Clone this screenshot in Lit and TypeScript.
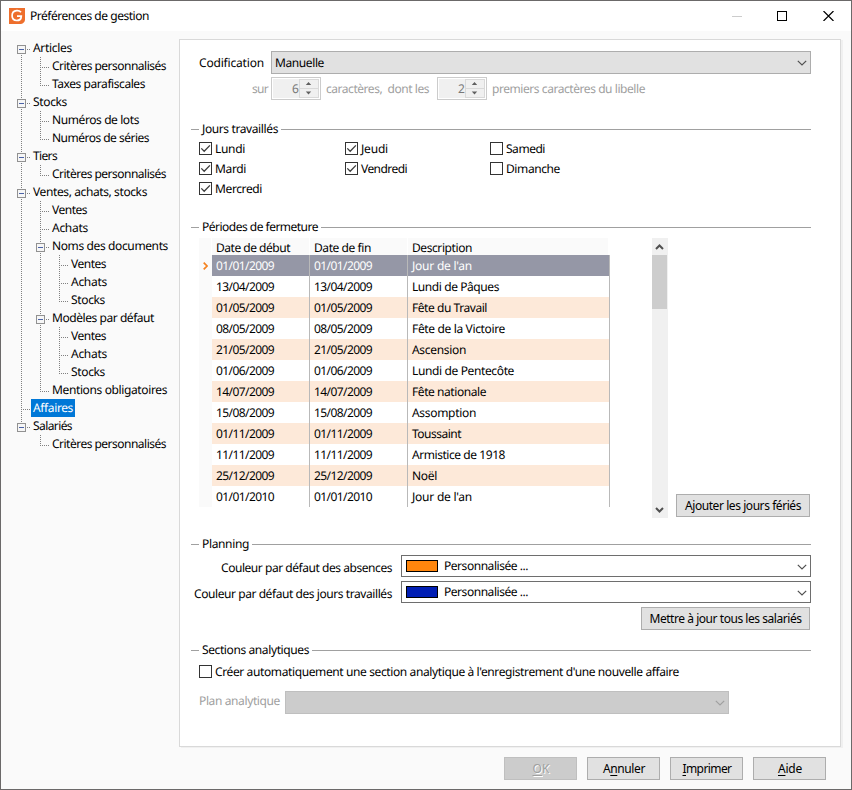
import { LitElement, html, svg, css, nothing } from "lit";
import { customElement, property } from "lit/decorators.js";
import { classMap } from "lit/directives/class-map.js";

/** A run of text set to a fixed advance width by adjusting its tracking. */
@customElement("fit-text")
class FitText extends LitElement {
  static styles = css`
    :host { display: inline-block; white-space: pre; flex: none; text-align: left; }
  `;
  @property({ type: Number }) w = 0;
  firstUpdated() {
    const count = (this.textContent ?? "").length;
    const natural = this.getBoundingClientRect().width;
    if (!count || !this.w || !natural) return;
    this.style.letterSpacing = `${(this.w - natural) / count}px`;
    this.style.width = `${this.w}px`;
  }
  render() {
    return html`<slot></slot>`;
  }
}

const t = (text: unknown, w: number) => html`<fit-text w=${w}>${text}</fit-text>`;

/* Guide cells: "|" through line, "+" branch, "L" last branch, "." blank,
   "b" box on branch, "f" first box, "l" last box */
type Node = [cells: string, label: string, width: number];
const TREE: Node[] = [
  ["f", "Articles", 39],
  ["|+", "Critères personnalisés", 114],
  ["|L", "Taxes parafiscales", 93],
  ["b", "Stocks", 34],
  ["|+", "Numéros de lots", 87],
  ["|L", "Numéros de séries", 97],
  ["b", "Tiers", 24],
  ["|L", "Critères personnalisés", 114],
  ["b", "Ventes, achats, stocks", 114],
  ["|+", "Ventes", 35],
  ["|+", "Achats", 36],
  ["|b", "Noms des documents", 116],
  ["||+", "Ventes", 35],
  ["||+", "Achats", 36],
  ["||L", "Stocks", 34],
  ["|b", "Modèles par défaut", 102],
  ["||+", "Ventes", 35],
  ["||+", "Achats", 36],
  ["||L", "Stocks", 34],
  ["|L", "Mentions obligatoires", 115],
  ["+", "Affaires", 40],
  ["l", "Salariés", 39],
  [".L", "Critères personnalisés", 114],
];

const ROWS: [string, string, number][] = [
  ["01/01/2009", "Jour de l'an", 60],
  ["13/04/2009", "Lundi de Pâques", 87],
  ["01/05/2009", "Fête du Travail", 75],
  ["08/05/2009", "Fête de la Victoire", 93],
  ["21/05/2009", "Ascension", 54],
  ["01/06/2009", "Lundi de Pentecôte", 102],
  ["14/07/2009", "Fête nationale", 74],
  ["15/08/2009", "Assomption", 64],
  ["01/11/2009", "Toussaint", 49],
  ["11/11/2009", "Armistice de 1918", 93],
  ["25/12/2009", "Noël", 25],
  ["01/01/2010", "Jour de l'an", 60],
];

const DAYS: [string, number, boolean][][] = [
  [["Lundi", 30, true], ["Mardi", 31, true], ["Mercredi", 47, true]],
  [["Jeudi", 27, true], ["Vendredi", 46, true]],
  [["Samedi", 39, false], ["Dimanche", 54, false]],
];

@customElement("app-root")
class AppRoot extends LitElement {
  static styles = css`
    :host {
      display: block;
      font: 12px/18px "Noto Sans", "Open Sans", sans-serif;
      text-rendering: geometricPrecision;
      color: #000;
    }
    * { box-sizing: border-box; }
    svg { display: block; flex: none; }
    .window {
      width: 852px; height: 790px; border: 1px solid #6b6969; background: #fafafa;
      display: flex; flex-direction: column; overflow: hidden;
    }
    .titlebar {
      height: 30px; flex: none; background: #fff; display: flex; align-items: center;
      padding: 0 17px 0 8px;
    }
    .titlebar fit-text { margin-left: 5px; flex: none; }
    .controls { margin-left: auto; display: flex; gap: 35px; }
    .controls .close { margin-left: 1px; }
    .body { display: flex; flex: none; height: 718px; padding-top: 8px; }
    .tree { width: 178px; flex: none; padding-left: 11px; }
    .node { display: flex; height: 18px; }
    .label { padding: 0 2px; height: 18px; line-height: 17px; }
    .label.selected { background: #0078d7; color: #fff; }
    .panel {
      width: 662px; height: 708px; flex: none; border: 1px solid #d9d9d9; background: #fff;
      box-shadow: 2px 1px 0 #f0f0f0; padding: 11px 29px 0 11px;
    }
    .line { display: flex; align-items: center; }
    .end { justify-content: flex-end; }
    .codif { height: 23px; padding-left: 8px; justify-content: space-between; }
    .combo {
      display: flex; align-items: center; justify-content: space-between;
      border: 1px solid #adadad; background: #e1e1e1; height: 23px; padding: 0 3px;
    }
    .combo.main { width: 540px; }
    .combo.color { width: 410px; height: 22px; background: #fff; border-color: #6e6e6e; padding-left: 4px; }
    .combo.color .line { gap: 6px; margin-top: -1px; }
    .combo.color > svg { margin-top: 1px; }
    .combo.off { width: 444px; background: #ccc; border-color: #bfbfbf; }
    .disabled { color: #a0a0a0; }
    .spins { height: 23px; margin-top: 3px; padding-left: 61px; }
    .spin {
      width: 50px; height: 23px; border: 1px solid #ccc; padding: 1px; background: #fff;
      display: flex; color: #787878; margin: 0 5px 0 3px;
    }
    .spin.second { margin-left: 8px; }
    .spin .value { flex: 1; background: #f0f0f0; text-align: right; line-height: 19px; }
    .legend { display: flex; align-items: center; height: 18px; gap: 3px; }
    .legend::before { content: ""; width: 8px; height: 1px; background: #a0a0a0; }
    .legend::after { content: ""; flex: 1; height: 1px; background: #a0a0a0; }
    .days { display: grid; grid-template-columns: 146px 145px 1fr; padding-left: 8px; margin-top: 1px; }
    .check { display: flex; align-items: center; gap: 3px; height: 20px; }
    .check svg { margin-bottom: 1px; }
    .closures { display: flex; height: 280px; padding-left: 8px; margin-top: 2px; }
    .table { width: 411px; }
    .head, .row { display: grid; grid-template-columns: 13px 98px 98px 202px; height: 21px; }
    .head { height: 17px; background: #fafafa; width: 410px; grid-template-columns: 13px 98px 98px 201px; line-height: 19px; }
    .head > div { padding-left: 4px; border-right: 1px solid #fff; overflow: visible; }
    .row > .mark { background: #fafafa; display: flex; align-items: center; justify-content: center; }
    .cell { height: 21px; padding-left: 4px; border-right: 1px solid #b9b9b9; line-height: 22px; background: #fff; background-clip: padding-box; }
    .odd .cell { background-color: #fde9d9; }
    .picked .cell { background-color: #9597a6; color: #fff; }
    .scroll {
      width: 16px; height: 280px; background: #f0f0f0; margin-left: 42px; flex: none;
      display: flex; flex-direction: column;
    }
    .thumb { width: 15px; height: 54px; background: #cdcdcd; }
    .scroll .down { margin-top: auto; }
    .button {
      font: inherit; color: #000; background: #e1e1e1; border: 1px solid #adadad; border-radius: 0;
      height: 23px; padding: 0; display: flex; align-items: center; justify-content: center; flex: none;
    }
    .button.holidays { width: 134px; margin: auto 0 1px 8px; }
    .button.update { width: 169px; margin-right: 1px; }
    .button.small { width: 73px; padding-left: 1px; }
    .button.small:disabled { background: #ccc; border-color: #bfbfbf; color: #a0a0a0; text-shadow: 1px 1px 0 #fff; }
    u { text-underline-offset: 2px; text-decoration-thickness: 1px; }
    .color-line { height: 22px; justify-content: flex-end; gap: 9px; }
    .color-line > fit-text { margin-top: 3px; }
    .footer { display: flex; justify-content: flex-end; gap: 10px; padding: 8px 25px 0 0; }
    .gap-a { margin-top: 20px; }
    .gap-b { margin-top: 19px; }
    .gap-c { margin-top: 17px; }
    .gap-d { margin-top: 2px; }
    .gap-e { margin-top: 4px; }
    .gap-f { margin-top: 11px; }
    .auto { padding-left: 8px; margin-top: 3px; }
    .plan { padding-left: 8px; gap: 5px; margin-top: 9px; height: 23px; }
    .plan > fit-text { margin-top: -3px; }
  `;

  guide(kind: string) {
    const box = "bfl".includes(kind);
    const top = "|+Lbl".includes(kind);
    const bottom = "|+bf".includes(kind);
    const y1 = top ? 0 : 10;
    const y2 = bottom ? 18 : 11;
    return html`<svg width="19" height="18" viewBox="0 0 19 18" shape-rendering="crispEdges">
      ${kind === "." ? nothing : svg`<path d="M9.5 ${y1}V${y2}" stroke="#808080" stroke-dasharray="1 1" />`}
      ${kind === "|" || kind === "." ? nothing : svg`<path d="M${box ? 15 : 11} 10.5H19" stroke="#808080" stroke-dasharray="1 1" />`}
      ${box ? svg`<rect x="5.5" y="6.5" width="8" height="8" rx="1" fill="#f6f6f6" stroke="#919191" />
        <path d="M7 10.5H12" stroke="#4b63a7" />` : nothing}
    </svg>`;
  }

  chevron(color = "#505050") {
    return html`<svg width="10" height="6" viewBox="0 0 10 6">
      <path d="M.8.8 5 5 9.2.8" fill="none" stroke=${color} stroke-width="1.2" /></svg>`;
  }

  check(label: string, w: number, on: boolean) {
    return html`<div class="check">
      <svg width="13" height="13" viewBox="0 0 13 13">
        <rect x=".5" y=".5" width="12" height="12" fill="#fff" stroke="#333" />
        ${on ? svg`<path d="M2.3 6.4 5.2 9.3 10.9 3.4" fill="none" stroke="#3c3c3c" stroke-width="1.3" />` : nothing}
      </svg>${t(label, w)}</div>`;
  }

  spin(value: string, second = false) {
    return html`<div class=${classMap({ spin: true, second })}><div class="value">${t(value, 7)}</div>
      <svg width="20" height="19" viewBox="0 0 20 19">
        <rect x=".5" y=".5" width="19" height="18" fill="#f0f0f0" stroke="#d9d9d9" />
        <path d="M0 9.5H20" stroke="#d9d9d9" />
        <path d="M6.8 6H12.2L9.5 3ZM6.8 12.5H12.2L9.5 15.5Z" fill="#606060" />
      </svg></div>`;
  }

  colorLine(label: string, w: number, color: string) {
    return html`<div class="line color-line">${t(label, w)}
      <div class="combo color"><div class="line">
        <svg width="32" height="12"><rect x=".5" y=".5" width="31" height="11" fill=${color} stroke="#000" /></svg>
        ${t("Personnalisée ...", 84)}</div>${this.chevron()}</div></div>`;
  }

  render() {
    return html`<div class="window">
      <div class="titlebar">
        <svg width="16" height="16" viewBox="0 0 16 16">
          <path d="M0 0H16V12Q15.500 15 12 16H0Z" fill="#ee6f2d" />
          <path d="M12 4.300C10.800 2.900 9.300 2.500 7.600 2.700 4.700 3 3 5.200 3.100 7.900 3.200 10.600 5 12.500 7.700 12.500 10.500 12.500 12.200 10.900 12.300 8.100H8" fill="none" stroke="#fff" stroke-width="1.700" />
        </svg>
        ${t("Préférences de gestion", 119)}
        <div class="controls">
          <svg width="10" height="10"><path d="M0 5.500H10" stroke="#ccc" /></svg>
          <svg width="10" height="10"><rect x=".5" y=".5" width="9" height="9" fill="none" stroke="#000" /></svg>
          <svg class="close" width="11" height="10"><path d="M.5 0 10.500 10M10.500 0 .5 10" stroke="#000" stroke-width="1.200" /></svg>
        </div>
      </div>
      <div class="body">
        <div class="tree">
          ${TREE.map(([cells, label, w]) => html`<div class="node">
            ${[...cells].map((c) => this.guide(c))}
            <div class=${classMap({ label: true, selected: label === "Affaires" })}>${t(label, w)}</div>
          </div>`)}
        </div>
        <div class="panel">
          <div class="line codif">${t("Codification", 65)}
            <div class="combo main">${t("Manuelle", 49)}${this.chevron()}</div>
          </div>
          <div class="line spins disabled">${t("sur", 16)}${this.spin("6")}${t("caractères,  dont les", 103)}${this.spin("2", true)}${t("premiers caractères du libelle", 153)}
          </div>
          <div class="legend gap-a">${t("Jours travaillés", 76)}</div>
          <div class="days">${DAYS.map((col) => html`<div>${col.map(([l, w, on]) => this.check(l, w, on))}</div>`)}</div>
          <div class="legend gap-b">${t("Périodes de fermeture", 116)}</div>
          <div class="closures">
            <div class="table">
              <div class="head"><div></div><div>${t("Date de début", 74)}</div><div>${t("Date de fin", 57)}</div><div>${t("Description", 60)}</div></div>
              ${ROWS.map(([date, label, w], i) => html`<div class=${classMap({ row: true, odd: i % 2 === 0, picked: i === 0 })}>
                <div class="mark">${i === 0 ? html`<svg width="5" height="8" viewBox="0 0 5 8"><path d="M.7.7 4 4 .7 7.300" fill="none" stroke="#f58220" stroke-width="1.700" /></svg>` : nothing}</div>
                <div class="cell">${t(date, 58)}</div><div class="cell">${t(date, 58)}</div><div class="cell">${t(label, w)}</div>
              </div>`)}
            </div>
            <div class="scroll">
              <svg width="16" height="17"><path d="M4.500 11 8 7.500 11.500 11" transform="translate(-.5 0)" fill="none" stroke="#505050" stroke-width="2" /></svg>
              <div class="thumb"></div>
              <svg class="down" width="16" height="17"><path d="M4.500 7 8 10.500 11.500 7" transform="translate(-.5 0)" fill="none" stroke="#505050" stroke-width="2" /></svg>
            </div>
            <button class="button holidays">${t("Ajouter les jours fériés", 116)}</button>
          </div>
          <div class="legend gap-c">${t("Planning", 47)}</div>
          <div class="gap-d">${this.colorLine("Couleur par défaut des absences", 171, "#ff860d")}</div>
          <div class="gap-e">${this.colorLine("Couleur par défaut des jours travaillés", 198, "#001eb4")}</div>
          <div class="line end gap-e"><button class="button update">${t("Mettre à jour tous les salariés", 152)}</button></div>
          <div class="legend gap-f">${t("Sections analytiques", 107)}</div>
          <div class="auto">${this.check("Créer automatiquement une section analytique à l'enregistrement d'une nouvelle affaire", 464, false)}</div>
          <div class="line plan disabled">${t("Plan analytique", 81)}<div class="combo off"><span></span>${this.chevron("#a0a0a0")}</div></div>
        </div>
      </div>
      <div class="footer">
        <button class="button small" disabled>${t(html`<u>O</u>K`, 17)}</button>
        <button class="button small">${t(html`A<u>n</u>nuler`, 42)}</button>
        <button class="button small">${t(html`<u>I</u>mprimer`, 49)}</button>
        <button class="button small">${t(html`<u>A</u>ide`, 24)}</button>
      </div>
    </div>`;
  }
}
